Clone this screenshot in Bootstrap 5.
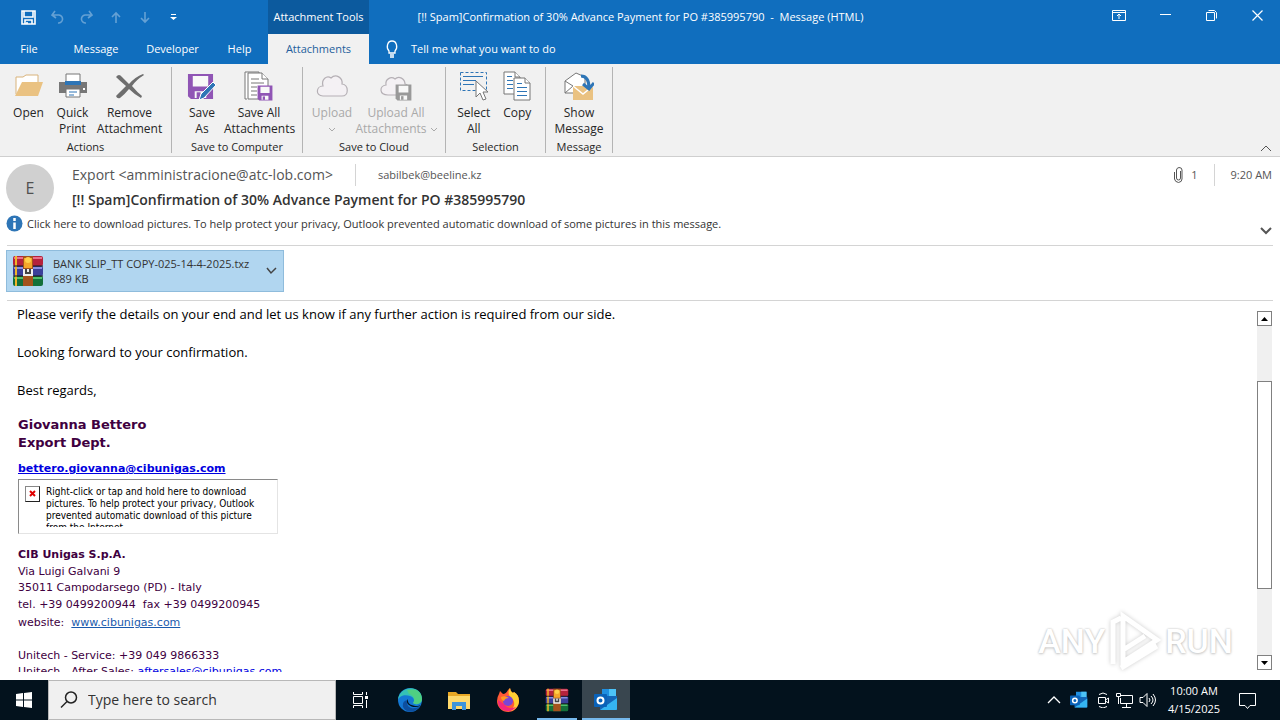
<!DOCTYPE html>
<html lang="en">
<head>
<meta charset="utf-8">
<meta name="viewport" content="width=device-width, initial-scale=1">
<title>Message (HTML)</title>
<link href="https://cdn.jsdelivr.net/npm/bootstrap@5.3.0/dist/css/bootstrap.min.css" rel="stylesheet">
<style>
  :root { --brand: #106ebe; --brand-dark: #0c5a9e; --line: #d4d4d4; }
  body { font: 12px/16px "Open Sans", "Noto Sans", sans-serif; color: #262626; background: #fff; }
  button { font: inherit; color: inherit; background: none; border: 0; padding: 0; }
  svg { display: block; flex: none; }

  /* title bar and tabs */
  .app-top { background: var(--brand); color: #fff; font-size: 11px; }
  .title-row { height: 34px; }
  .quick { width: 268px; padding-left: 14px; }
  .quick button { width: 29px; height: 34px; display: grid; place-items: center; }
  .quick button:disabled { opacity: .35; }
  .tools-tab { width: 101px; background: var(--brand-dark); }
  .window-title { padding-right: 184px; white-space: pre; }
  .window-btns button { width: 46px; height: 34px; padding-bottom: 4px; display: grid; place-items: center; }
  .tab-row { height: 30px; }
  .tab-row a { color: #fff; text-decoration: none; }
  .tab-file { width: 58px; } .tab-msg { width: 76px; } .tab-dev { width: 77px; } .tab-help { width: 57px; }
  .tab-row .tab-on { width: 101px; background: #f1f1f1; color: #245e9c; }

  /* ribbon */
  .ribbon { background: #f1f1f1; border-bottom: 1px solid #cfcfcf; }
  .group { padding: 0 6px; margin: 3px 0; height: 86px; border-right: 1px solid #b4b4b4; }
  .g-actions { width: 172px; } .g-computer { width: 131px; } .g-cloud { width: 143px; }
  .g-select { width: 100px; } .g-show { width: 67px; }
  .tool { width: 44px; line-height: 16px; color: #262626; }
  .tool svg { margin: 2px auto 4px; }
  .tool svg.drop { margin: 0 auto; }
  .tool:disabled { color: #a9a9a9; }
  .tool-wide { width: 70px; } .tool-cloud { width: 84px; } .tool-show { width: 54px; }
  .group-name { font-size: 11px; line-height: 12px; }

  /* message header */
  .head { padding: 7px 0 0 6px; }
  .avatar { width: 48px; height: 48px; background: #d0d0d0; color: #505050; font-size: 16px; }
  .who { padding-left: 18px; }
  .from { font-size: 14px; line-height: 22px; color: #555; }
  .to { font-size: 11px; color: #555; }
  .vline { border-left: 1px solid var(--line); height: 22px; }
  .vline-from { margin: 0 22px; }
  .subject { padding-top: 2px; font-size: 14px; line-height: 24px; font-weight: 600; color: #333; }
  .info { font-size: 11px; line-height: 18px; color: #333; padding: 3px 0 10px; }
  .rule { border-bottom: 1px solid var(--line); margin: 0 7px; }
  .files { padding: 0 6px; }
  .attach { width: 278px; height: 42px; background: #b1d6f0; border: 1px solid #8fbcdc; padding: 0 6px 0 4px; font-size: 11px; line-height: 15px; color: #333; white-space: nowrap; }

  /* message text */
  .pane { min-height: 0; padding: 0 8px 8px 17px; }
  .letter { overflow: hidden; min-height: 0; padding-top: 4px; color: #000; font-size: 13px; line-height: 19px; }
  .letter p { margin: 0 0 19px; }
  .sign { color: #40003f; font: 11px/16px "DejaVu Sans", sans-serif; padding-left: 1px; }
  .sign-name { font-size: 13px; line-height: 18px; font-weight: 700; }
  .sign-line { line-height: 18px; }
  .sign a { color: #0000e0; }
  .sign a.site { color: #1a5aad; }
  .blocked { width: 260px; height: 55px; margin: 1px 0 8px; border: 1px solid #e4e4e4; border-top-color: #8a8a8a; border-left-color: #8a8a8a; padding: 6px; gap: 6px; color: #000; font: 10px/12px "DejaVu Sans Condensed", "DejaVu Sans", sans-serif; }
  .blocked div { height: 41px; overflow: hidden; }
  .redx { width: 15px; height: 16px; border: 1px solid #888; border-right-color: #222; border-bottom-color: #222; }
  .scroll { width: 15px; margin-top: 10px; margin-bottom: 2px; background: #f0f0f0; }
  .scroll button { height: 15px; border: 1px solid #808080; background: #fff; display: grid; place-items: center; }
  .thumb { border: 1px solid #808080; background: #fff; flex: 208 0 0; }
  .before { flex: 55 0 0; } .after { flex: 66 0 0; }
  .watermark { position: absolute; right: 47px; bottom: 8px; color: #fff; font: 500 34px/60px Roboto, sans-serif; text-shadow: 0 0 2px #bbb, 0 1px 3px #ccc; pointer-events: none; }
  .watermark svg { filter: drop-shadow(0 0 2px #ccc); }

  /* taskbar */
  .taskbar { height: 40px; background: #03121d; color: #fff; }
  .task { width: 49px; height: 40px; display: grid; place-items: center; }
  .task-start { width: 48px; }
  .task-open { box-shadow: inset 0 -2px #76b9ed; width: 40px; margin: 0 5px; }
  .task-now { box-shadow: inset 0 -2px #76b9ed; background: #39464f; width: 48px; }
  .search { width: 288px; background: #f0f0f0; border: 1px solid #b8b8b8; padding-left: 11px; }
  .search input { font-size: 14px; border: 0; background: none; outline: 0; min-width: 0; color: #333; }
  .search input::placeholder { color: #333; opacity: 1; }
  .tray { gap: 5px; }
  .clock { line-height: 18px; width: 64px; white-space: nowrap; font-size: 11px; }
</style>
</head>
<body class="vh-100 d-flex flex-column overflow-hidden">

<svg width="0" height="0" class="position-absolute" aria-hidden="true">
  <defs>
    <symbol id="books" viewBox="0 0 32 32">
      <rect x="1" y="1" width="30" height="10" rx="2" fill="#b5223c"/><path d="M2 3h28" stroke="#e8708a" stroke-width="2"/>
      <rect x="1" y="11" width="30" height="10" rx="2" fill="#3b3f9a"/><path d="M2 13h28" stroke="#8a8fe0" stroke-width="2"/>
      <rect x="1" y="21" width="30" height="10" rx="2" fill="#14703a"/><path d="M2 23h28" stroke="#4fc069" stroke-width="2"/>
      <path d="M4 1v30" stroke="#f0b429" stroke-width="2"/><path d="M1 11h30M1 21h30" stroke="#181818"/>
      <rect x="11" y="1" width="10" height="30" fill="#a4521c"/><path d="M12 3h8v10h-8z" fill="#f4a52a"/>
      <circle cx="16" cy="5" r="3" fill="#ffd04a"/><path d="M11 14h10v7H11z" fill="#eee"/><path d="M14 14v4h4v-4" fill="none" stroke="#444" stroke-width="2"/>
    </symbol>
    <symbol id="olk" viewBox="0 0 24 24">
      <path d="M8 1h14v8H8z" fill="#1f8fe0"/><path d="M15 1h7v8h-7z" fill="#4cc3f7"/><path d="M6 8h17v14H6z" fill="#1366b8"/>
      <path d="M6 22l17-12v11q0 1-1 1z" fill="#35b5f2"/><rect y="6" width="13" height="13" rx="1" fill="#0a62b8"/>
      <circle cx="6.500" cy="12.500" r="3" fill="none" stroke="#fff" stroke-width="2"/>
    </symbol>
    <symbol id="disk" viewBox="0 0 28 28"><path d="M1 1h26v26H4l-3-3z" fill="currentColor"/><path d="M6 3h16v11H6zM8 19h12v7H8z" fill="#f8f8f8"/><path d="M10 20h4v6h-4z" fill="currentColor"/></symbol>
  </defs>
</svg>

<header class="app-top">
  <div class="title-row d-flex">
    <div class="quick d-flex">
      <button aria-label="Save"><svg width="15" height="15" fill="none" stroke="#fff" stroke-width="1.600"><path d="M1 1h13v13H1zM3 1v6h9V1M4 14v-4h7v4M6 14v-2"/></svg></button>
      <button aria-label="Undo" disabled><svg width="15" height="14" fill="none" stroke="#fff" stroke-width="1.600"><path d="M5 1L2 5l4 3M2 5h7a4 4 0 1 1-1 8"/></svg></button>
      <button aria-label="Redo" disabled><svg width="15" height="14" fill="none" stroke="#fff" stroke-width="1.600"><path d="M10 1l3 4-4 3M13 5H6a4 4 0 1 0 1 8"/></svg></button>
      <button aria-label="Previous item" disabled><svg width="12" height="13" fill="none" stroke="#fff" stroke-width="1.600"><path d="M6 12V2M2 6l4-4 4 4"/></svg></button>
      <button aria-label="Next item" disabled><svg width="12" height="13" fill="none" stroke="#fff" stroke-width="1.600"><path d="M6 1v10M2 7l4 4 4-4"/></svg></button>
      <button aria-label="Customize toolbar"><svg width="7" height="7" fill="#fff"><path d="M1 0h5v1H1zM0 3h7L3.500 6z"/></svg></button>
    </div>
    <div class="tools-tab d-flex align-items-center justify-content-center">Attachment Tools</div>
    <div class="window-title flex-grow-1 d-flex align-items-center justify-content-center">[!! Spam]Confirmation of 30% Advance Payment for PO #385995790  -  Message (HTML)</div>
    <div class="window-btns d-flex">
      <button aria-label="Ribbon display options"><svg width="14" height="11" fill="none" stroke="#fff"><path d="M.5.5h13v10H.5zM.5 2.500h13M7 9V4M5 6l2-2 2 2"/></svg></button>
      <button aria-label="Minimize"><svg width="11" height="3" stroke="#fff"><path d="M0 .5h11"/></svg></button>
      <button aria-label="Restore"><svg width="11" height="11" fill="none" stroke="#fff"><path d="M.5 2.500h8v8h-8zM2.500.5h6l2 2v6"/></svg></button>
      <button aria-label="Close"><svg width="11" height="11" stroke="#fff" stroke-width="1.200"><path d="M.5.5l10 10M10.500.5l-10 10"/></svg></button>
    </div>
  </div>
  <nav class="tab-row d-flex align-items-stretch text-center">
    <a href="#" class="tab-file d-flex align-items-center justify-content-center">File</a>
    <a href="#" class="tab-msg d-flex align-items-center justify-content-center">Message</a>
    <a href="#" class="tab-dev d-flex align-items-center justify-content-center">Developer</a>
    <a href="#" class="tab-help d-flex align-items-center justify-content-center">Help</a>
    <a href="#" class="tab-on d-flex align-items-center justify-content-center">Attachments</a>
    <button class="d-flex align-items-center ms-3 gap-2"><svg width="18" height="18" fill="none" stroke="#fff" stroke-width="1.300"><path d="M4 12V11C1 8 2 1 7 1s6 7 3 10v2H4zM5 15h4M5 17h4"/></svg>Tell me what you want to do</button>
  </nav>
</header>

<section class="ribbon d-flex">
  <div class="group g-actions d-flex flex-column justify-content-between">
    <div class="d-flex align-items-start justify-content-center">
      <button class="tool"><svg width="30" height="32" viewBox="0 0 30 32"><path d="M2 25V8h7l3-2h12v7" fill="#fff" stroke="#d9b37a"/><path d="M1 27L8 13h21l-5 14z" fill="#eac282"/></svg>Open</button>
      <button class="tool"><svg width="30" height="32" viewBox="0 0 30 32"><path d="M1 13h28v11H1z" fill="#777"/><path d="M8 5h14v8H8z" fill="#fff" stroke="#777"/><path d="M7 12h16v4H7z" fill="#2e75b6"/><path d="M8 20h14v8H8z" fill="#fff" stroke="#777"/><path d="M11 23h8M11 26h5" stroke="#2e75b6"/><path d="M25 20h2" stroke="#fff" stroke-width="2"/></svg>Quick<br>Print</button>
      <button class="tool tool-wide"><svg width="30" height="32" viewBox="0 0 30 32"><path d="M1 8q3-4 6 0l7 7Q20 8 28 5l1 1q-8 5-12 11 5 6 10 10l-1 2q-7-4-12-9-4 5-9 9-3 1-4-2 5-5 10-10Q5 12 1 8z" fill="#6e6e6e"/></svg>Remove<br>Attachment</button>
    </div>
    <div class="group-name text-center">Actions</div>
  </div>
  <div class="group g-computer d-flex flex-column justify-content-between">
    <div class="d-flex align-items-start justify-content-center">
      <button class="tool"><svg width="30" height="32" viewBox="0 0 30 32" color="#9055b5"><use href="#disk" x="0" y="4" width="27" height="27"/><path d="M12 31l2-6 12-12 3 3-12 13z" fill="#2e75b6" stroke="#fff"/></svg>Save<br>As</button>
      <button class="tool tool-wide"><svg width="30" height="32" viewBox="0 0 30 32" fill="#fff" stroke="#777" color="#9055b5"><path d="M3 30H1V3h14v3"/><path d="M4 4h14l6 6v20H4z"/><path d="M18 4v6h6M7 10h8M7 14h13M7 18h6M7 22h6M7 26h6"/><use href="#disk" x="13" y="16" width="16" height="16" stroke="none"/></svg>Save All<br>Attachments</button>
    </div>
    <div class="group-name text-center">Save to Computer</div>
  </div>
  <div class="group g-cloud d-flex flex-column justify-content-between">
    <div class="d-flex align-items-start justify-content-center">
      <button class="tool" disabled><svg width="32" height="32" viewBox="0 0 32 32" fill="#f4f1f4" stroke="#b5b0b5" stroke-width="1.200"><path d="M7 27C-1 27 0 17 7 17 5 10 11 6 15 9c5-5 12 0 11 6 7 1 7 12 0 12z"/></svg>Upload<svg class="drop" width="6" height="16" fill="none" stroke="#aaa"><path d="M0 7l3 3 3-3"/></svg></button>
      <button class="tool tool-cloud" disabled><svg width="32" height="32" viewBox="0 0 32 32" fill="#f4f1f4" stroke="#b5b0b5" stroke-width="1.200"><path d="M8 26c-9 0-9-9-2-10-1-6 5-9 9-6 4-4 10 0 10 5 5 1 6 10 0 11z"/><g color="#999"><use href="#disk" x="15" y="15" width="17" height="17" stroke="none"/></g></svg>Upload All<br><span class="d-flex justify-content-center gap-1">Attachments<svg class="m-0" width="6" height="16" fill="none" stroke="#aaa"><path d="M0 7l3 3 3-3"/></svg></span></button>
    </div>
    <div class="group-name text-center">Save to Cloud</div>
  </div>
  <div class="group g-select d-flex flex-column justify-content-between">
    <div class="d-flex align-items-start justify-content-center">
      <button class="tool"><svg width="32" height="32" viewBox="0 0 32 32" fill="none" stroke="#2e75b6"><path d="M2.500 3.500h26v18h-26z" stroke-dasharray="3 2"/><path d="M5 7.500h20M5 11.500h13M5 15.500h11"/><path d="M18 12v16l4-4 3 7 3-1-3-7h5z" fill="#fff" stroke="#777"/></svg>Select<br>All</button>
      <button class="tool"><svg width="30" height="32" viewBox="0 0 30 32" fill="#fff" stroke="#777"><path d="M2 3h11l5 5v17H2z"/><path d="M5 7.500h5M5 11.500h6M5 15.500h6M5 19.500h6" stroke="#2e75b6"/><path d="M12 9h11l5 5v17H12z"/><path d="M13 3v5h5M23 9v5h5"/><path d="M15 14.500h5M15 18.500h10M15 22.500h10M15 26.500h10" stroke="#2e75b6"/></svg>Copy</button>
    </div>
    <div class="group-name text-center">Selection</div>
  </div>
  <div class="group g-show d-flex flex-column justify-content-between">
    <div class="d-flex align-items-start justify-content-center">
      <button class="tool tool-show"><svg width="30" height="32" viewBox="0 0 30 32"><path d="M1 24V12l11-8 9 4v16z" fill="#fff" stroke="#777"/><path d="M1 12l8 5M1 24l8-7" stroke="#777"/><path d="M9 17h20v14H9z" fill="#eac282"/><path d="M9 17l10 8 10-8" fill="none" stroke="#fff" stroke-width="1.500"/><path d="M17 7c6 0 8 5 8 12M19 15l6 5 5-6" fill="none" stroke="#2e75b6" stroke-width="3"/></svg>Show<br>Message</button>
    </div>
    <div class="group-name text-center">Message</div>
  </div>
  <button class="ms-auto align-self-end me-2 pb-1" aria-label="Collapse ribbon"><svg width="12" height="7" fill="none" stroke="#555"><path d="M1 6l5-5 5 5"/></svg></button>
</section>

<section class="head">
  <div class="d-flex">
    <div class="avatar rounded-circle d-flex align-items-center justify-content-center">E</div>
    <div class="who flex-grow-1">
      <div class="d-flex align-items-center">
        <span class="from">Export &lt;amministracione@atc-lob.com&gt;</span>
        <span class="vline vline-from"></span><span class="to">sabilbek@beeline.kz</span>
        <span class="to ms-auto d-flex align-items-center gap-2 me-3"><svg width="9" height="16" fill="none" stroke="#555"><path d="M6.500 4v7a2 2 0 0 1-4 0V3q0-2 2.500-2.500Q8 .5 8 3v9q0 3-3.500 3.500Q1 15 .5 12V5"/></svg>1</span>
        <span class="vline me-3"></span><span class="to me-2">9:20 AM</span>
      </div>
      <div class="subject">[!! Spam]Confirmation of 30% Advance Payment for PO #385995790</div>
    </div>
  </div>
  <div class="info d-flex align-items-start gap-1">
    <svg width="17" height="17"><circle cx="8.500" cy="8.500" r="8" fill="#2e75b6"/><path d="M8.500 3v3M8.500 7.500V14" stroke="#fff" stroke-width="2.500"/></svg>
    <span>Click here to download pictures. To help protect your privacy, Outlook prevented automatic download of some pictures in this message.</span>
    <button class="ms-auto me-2 pt-2 mt-1" aria-label="Expand header"><svg width="12" height="8" fill="none" stroke="#555" stroke-width="2"><path d="M1 1l5 5 5-5"/></svg></button>
  </div>
</section>
<div class="rule"></div>
<div class="files">
  <button class="attach d-flex align-items-center text-start gap-2 my-1">
    <svg width="34" height="32"><use href="#books" width="34" height="32"/></svg>
    <span>BANK SLIP_TT COPY-025-14-4-2025.txz<br>689 KB</span>
    <svg class="ms-auto" width="11" height="8" fill="none" stroke="#444" stroke-width="1.500"><path d="M1 1l4 5 5-5"/></svg>
  </button>
</div>
<div class="rule mt-1"></div>

<main class="pane flex-grow-1 d-flex position-relative">
  <article class="letter flex-grow-1">
    <p>Please verify the details on your end and let us know if any further action is required from our side.</p>
    <p>Looking forward to your confirmation.</p>
    <p class="mb-3">Best regards,</p>
    <div class="sign">
      <div class="sign-name">Giovanna Bettero<br>Export Dept.</div>
      <div class="sign-line mt-2"><a href="#"><b>bettero.giovanna@cibunigas.com</b></a></div>
      <div class="blocked d-flex align-items-start">
        <span class="redx flex-shrink-0"><svg width="13" height="14" stroke="#e00000" stroke-width="2"><path d="M4 4l5 5M9 4l-5 5"/></svg></span>
        <div>Right-click or tap and hold here to download pictures. To help protect your privacy, Outlook prevented automatic download of this picture from the Internet.</div>
      </div>
      <div class="sign-line pt-1"><b>CIB Unigas S.p.A.</b></div>
      <div>Via Luigi Galvani 9<br>35011 Campodarsego (PD) - Italy</div>
      <div class="sign-line">tel. +39 0499200944 &nbsp;fax +39 0499200945</div>
      <div class="sign-line">website: &nbsp;<a class="site" href="#">www.cibunigas.com</a></div>
      <div class="mt-3">Unitech - Service: +39 049 9866333</div>
      <div>Unitech - After Sales: <a href="#">aftersales@cibunigas.com</a></div>
    </div>
  </article>
  <div class="scroll d-flex flex-column">
    <button aria-label="Scroll up"><svg width="7" height="4"><path d="M0 4l3.500-4L7 4z"/></svg></button>
    <span class="before"></span><span class="thumb"></span><span class="after"></span>
    <button aria-label="Scroll down"><svg width="7" height="4"><path d="M0 0h7L3.500 4z"/></svg></button>
  </div>
  <div class="watermark d-flex align-items-center">ANY<svg width="60" height="62" viewBox="0 0 60 62" fill="none" stroke="#fff" stroke-width="5"><path d="M8 54V12l8-4M18 6v46l34-22zM18 40l22-14M16 58l36-22"/></svg>RUN</div>
</main>

<footer class="taskbar d-flex">
  <button class="task task-start" aria-label="Start"><svg width="16" height="16" fill="#fff"><path d="M0 2l7-1v6.500H0zM8 1l8-1v7.500H8zM0 8.500h7V15l-7-1zM8 8.500h8V16l-8-1z"/></svg></button>
  <label class="search d-flex align-items-center gap-2"><svg width="18" height="18" fill="none" stroke="#222" stroke-width="1.500"><circle cx="11" cy="6.500" r="5.500"/><path d="M7 10.500l-6 6"/></svg><input class="flex-grow-1" type="search" placeholder="Type here to search" aria-label="Search"></label>
  <button class="task" aria-label="Task view"><svg width="17" height="16" fill="none" stroke="#fff"><path d="M1.500 4.500h9v7h-9zM1.500 0v2.500h9V0M1.500 16v-2.500h9V16M14.500 0v3M14.500 8v8"/><path d="M13 4h3v3h-3z" fill="#fff" stroke="none"/></svg></button>
  <button class="task" aria-label="Edge"><svg width="24" height="24"><circle cx="12" cy="12" r="12" fill="#1478d4"/><path d="M0 12C1-3 24-4 24 11c0 5-6 7-9 4 2-2 1-6-3-7C7 6 1 8 0 12z" fill="#35c1b5"/><path d="M9 2q14-3 15 9c0 5-6 6-9 4 3-4 0-8-4-9z" fill="#5bd46c" opacity=".7"/><path d="M9 12c-1 9 7 10 13 6-4 7-14 8-17 1Q4 13 9 12z" fill="#0d4f9f"/><path d="M10 11c-1 5 4 7 9 7 2 0 4-1 3 0-4 2-9 1-11-1-3-2-2-5-1-6z" fill="#03121d"/></svg></button>
  <button class="task" aria-label="File Explorer"><svg width="22" height="19"><path d="M0 1h8l2 2h12v15H0z" fill="#e9a825"/><path d="M0 5h22v13H0z" fill="#ffd96b"/><path d="M4 11h14v8h-4v-4H8v4H4z" fill="#3d94d9"/></svg></button>
  <button class="task" aria-label="Firefox"><svg width="24" height="24"><path d="M3 6l1-3 3 3q3 0 5-4l2-2q0 3 3 5l1-1q5 3 5 9a11 11 0 0 1-22 0q0-4 2-7z" fill="#ff5a36"/><path d="M14 0q0 3 3 5l1-1q5 3 5 9c0 5-4 9-8 10 5-6 4-11-1-14-2-3-2-6 0-9z" fill="#ffcf33"/><path d="M2 12q0 11 10 11 5 0 8-4-8 3-12-3z" fill="#f5267b"/><circle cx="12" cy="13" r="5" fill="#7a45d6"/><path d="M5 9q4-2 8 1-4 0-5 3-3-1-3-4z" fill="#ff9b21"/></svg></button>
  <button class="task task-open" aria-label="WinRAR"><svg width="24" height="24"><use href="#books" width="24" height="24"/></svg></button>
  <button class="task task-now" aria-label="Outlook"><svg width="26" height="24"><use href="#olk" width="26" height="24"/></svg></button>
  <div class="tray d-flex align-items-center ms-auto">
    <svg width="14" height="8" fill="none" stroke="#fff" stroke-width="1.300"><path d="M1 7l6-6 6 6"/></svg>
    <svg class="ms-1" width="18" height="18"><use href="#olk" width="18" height="18"/></svg>
    <svg class="ms-1" width="14" height="16" fill="none" stroke="#fff"><path d="M1.500 5.500h7v6h-7zM8.500 8l3-2v5l-3-2M2 2.500q4-3 8 0M2 14.500q4 3 8 0"/></svg>
    <svg width="18" height="16" fill="none" stroke="#fff"><path d="M5 3.500h11.500v8H4.500V6M10.500 12v3M6 15.500h9M.5 1.500h4v3h-4zM2.500 5v7"/></svg>
    <svg width="18" height="16" fill="none" stroke="#fff"><path d="M1 5.500h3l4-4v13l-4-4H1zM10 6q2 2 0 4M12 4q4 4 0 8M14 2q5 6 0 12"/></svg>
    <div class="clock text-center">10:00 AM<br>4/15/2025</div>
    <svg class="ms-2 me-4" width="17" height="17" fill="none" stroke="#fff"><path d="M.5 1.500h16v12H11l-2.500 3-2.500-3H.5z"/></svg>
  </div>
</footer>
<script src="https://cdn.jsdelivr.net/npm/bootstrap@5.3.0/dist/js/bootstrap.bundle.min.js"></script>
</body>
</html>
